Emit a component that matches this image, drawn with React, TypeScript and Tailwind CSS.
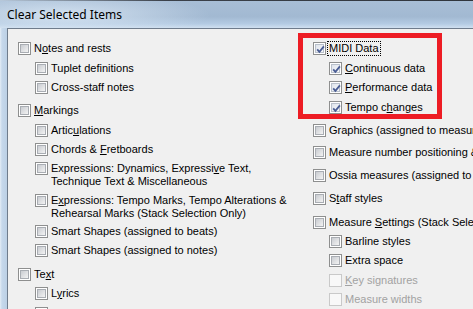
import React from 'react';

type Item = {
  label: React.ReactNode;
  sub?: boolean;
  checked?: boolean;
  disabled?: boolean;
  focus?: boolean;
  cls: string;
};

const U: React.FC<{ children: React.ReactNode }> = ({ children }) => (
  <span className="underline decoration-1 underline-offset-[1px]">{children}</span>
);

const Box: React.FC<{ checked?: boolean; disabled?: boolean }> = ({ checked, disabled }) => (
  <span
    className={`relative flex w-[13px] h-[13px] shrink-0 border p-[1px] ${
      disabled ? 'border-[#c9c9c9] bg-[#f8f8f8]' : 'border-[#8e8f8f] bg-white'
    }`}
  >
    {!disabled && (
      <span
        className={`block w-full h-full border ${
          checked
            ? 'border-[#b9c0cb] bg-[linear-gradient(135deg,#dfe4ec,#f7f8fa)]'
            : 'border-[#a9adb3] bg-[linear-gradient(135deg,#c9ccd1,#f3f3f3)]'
        }`}
      />
    )}
    {checked && (
      <svg className="absolute inset-0" width="13" height="13" viewBox="0 0 13 13">
        <path d="M3.2 6.4 L5.4 8.9 L9.9 3.4" fill="none" stroke="#4a5d94" strokeWidth="1.8" />
      </svg>
    )}
  </span>
);

const Row: React.FC<Item & { indent: string }> = ({ label, sub, checked, disabled, focus, cls, indent }) => (
  <div className={`flex items-start ${sub ? indent : ''} ${cls}`}>
    <Box checked={checked} disabled={disabled} />
    <span
      className={`leading-[13px] whitespace-nowrap ${focus ? 'ml-[2px] px-[1px] outline outline-1 outline-dotted outline-black' : 'ml-[3px]'} ${
        disabled ? 'text-[#a2a2a2]' : 'text-black'
      }`}
    >
      {label}
    </span>
  </div>
);

const left: Item[] = [
  { label: <>N<U>o</U>tes and rests</>, cls: 'mt-[13px]' },
  { label: 'Tuplet definitions', sub: true, cls: 'mt-[7px]' },
  { label: 'Cross-staff notes', sub: true, cls: 'mt-[6px]' },
  { label: <><U>M</U>arkings</>, cls: 'mt-[10px]' },
  { label: <>Artic<U>u</U>lations</>, sub: true, cls: 'mt-[7px]' },
  { label: <>Chords &amp; <U>F</U>retboards</>, sub: true, cls: 'mt-[6px]' },
  {
    label: <>Expressions: Dynamics, Expressi<U>v</U>e Text,<br />Technique Text &amp; Miscellaneous</>,
    sub: true,
    cls: 'mt-[6px]',
  },
  {
    label: <>E<U>x</U>pressions: Tempo Marks, Tempo Alterations &amp;<br />Rehearsal Marks (Stack Selection Only)</>,
    sub: true,
    cls: 'mt-[6px]',
  },
  { label: 'Smart Shapes (assigned to beats)', sub: true, cls: 'mt-[5px]' },
  { label: <>Smart Shapes (assi<U>g</U>ned to notes)</>, sub: true, cls: 'mt-[6px]' },
  { label: <>Te<U>x</U>t</>, cls: 'mt-[11px]' },
  { label: <>L<U>y</U>rics</>, sub: true, cls: 'mt-[6px]' },
  { label: 'Staff-attached text blocks', sub: true, cls: 'mt-[7px]' },
];

const right: Item[] = [
  { label: 'MIDI Data', checked: true, focus: true, cls: 'mt-[13px]' },
  { label: <><U>C</U>ontinuous data</>, sub: true, checked: true, cls: 'mt-[7px]' },
  { label: <><U>P</U>erformance data</>, sub: true, checked: true, cls: 'mt-[6px]' },
  { label: <>Tempo c<U>h</U>anges</>, sub: true, checked: true, cls: 'mt-[7px]' },
  { label: 'Graphics (assigned to measures)', cls: 'mt-[10px]' },
  { label: 'Measure number positioning & ranges', cls: 'mt-[9px]' },
  { label: 'Ossia measures (assigned to measures)', cls: 'mt-[10px]' },
  { label: <>S<U>t</U>aff styles</>, cls: 'mt-[10px]' },
  { label: <>Measure <U>S</U>ettings (Stack Selection Only)</>, cls: 'mt-[11px]' },
  { label: 'Barline styles', sub: true, cls: 'mt-[6px]' },
  { label: 'Extra space', sub: true, cls: 'mt-[6px]' },
  { label: <><U>K</U>ey signatures</>, sub: true, disabled: true, cls: 'mt-[7px]' },
  { label: 'Measure widths', sub: true, disabled: true, cls: 'mt-[6px]' },
];

const App: React.FC = () => {
  return (
    <div className="relative w-[473px] h-[309px] overflow-hidden bg-[#c3d6ea] font-['Liberation_Sans',Arial,sans-serif] text-[11px]">
      {/* title bar */}
      <div className="relative h-[28px] bg-[linear-gradient(180deg,#a8bed6_0%,#a2b9d2_60%,#b4cbe3_85%,#d0e0f0_100%)]">
        <div className="absolute inset-0 bg-[radial-gradient(ellipse_150px_22px_at_60px_15px,rgba(214,228,242,0.95),rgba(214,228,242,0))]" />
        <div className="absolute top-0 left-0 right-0 h-[1px] bg-[linear-gradient(90deg,#b7c8da,#3b414a_35%,#30353c)]" />
        <div className="relative pl-[7px] pt-[7px] font-['Noto_Sans',sans-serif] text-[12px] leading-[16px] text-black">
          Clear Selected Items
        </div>
      </div>

      {/* frame + client */}
      <div className="flex h-[281px]">
        <div className="w-[7px] shrink-0 bg-[linear-gradient(90deg,#e4edf6_0px,#c6d8eb_2px,#bcd0e5_7px)]" />
        <div className="flex-1 border-l border-t border-[#6f7c8c] bg-[#f0f0f0] flex pl-[10px]">
          <div className="w-[295px] shrink-0 flex flex-col">
            {left.map((it, i) => (
              <Row key={i} {...it} indent="pl-[17px]" />
            ))}
          </div>
          <div className="flex flex-col">
            {right.map((it, i) => (
              <Row key={i} {...it} indent="pl-[16px]" />
            ))}
          </div>
        </div>
      </div>

      {/* red highlight annotation */}
      <div className="absolute left-[298px] top-[33px] w-[144px] h-[86px] border-[5px] border-[#ed1c24]" />
    </div>
  );
};

export default App;
